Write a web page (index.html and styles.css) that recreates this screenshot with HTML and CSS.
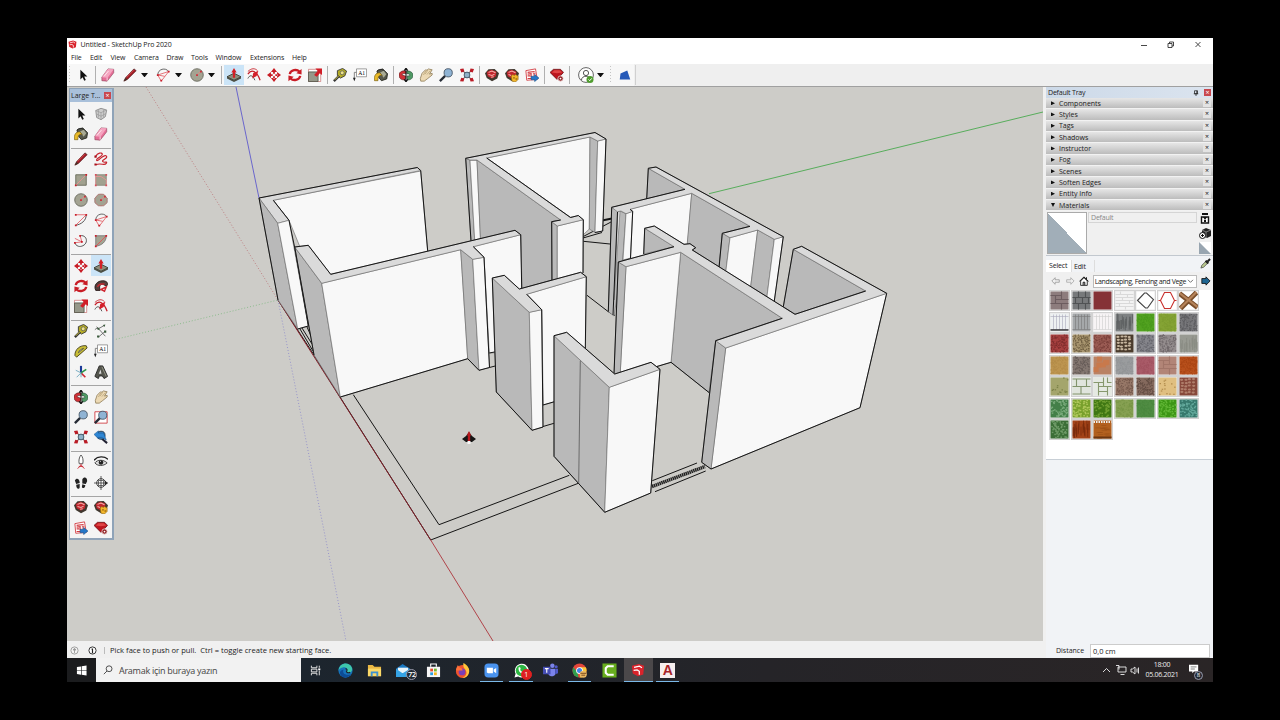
FILE: index.html
```html
<!DOCTYPE html>
<html lang="en">
<head>
  <meta charset="UTF-8" />
  <title>Untitled - SketchUp Pro 2020</title>
  <link rel="stylesheet" href="styles.css">
</head>
<body>
  <svg class="sprite">
    <symbol id="select" viewBox="0 0 16 16"><path d="M5 2v11l2.600-2.400 1.800 4 1.800-.8-1.800-4H13z" fill="#111"/></symbol>
    <symbol id="component" viewBox="0 0 16 16"><path d="M2 4l6-2.500 6.500 2L13 11l-5 3.500L3 12z" fill="#ccc" stroke="#8b8b8b"/><path d="M2 4l6 2.500 6-3M8 6.500v8M3 8l5 2.500 5.500-3M5 3v9M11 3v9" fill="none" stroke="#999" stroke-width=".8"/></symbol>
    <symbol id="eraser" viewBox="0 0 16 16"><path d="M1 10.500L8 1l6.500.5v4L7 15l-6-.5z" fill="#e56f98" stroke="#8c4258" stroke-width=".7"/><path d="M1 10.500L8 1l6.500.5-7 9.500z" fill="#f5a5c0"/><path d="M3.500 9.500l5-6M7 11v3.500" stroke="#fff" stroke-width=".8"/></symbol>
    <symbol id="paint" viewBox="0 0 16 16"><path d="M4 3l6-2 5.500 5.500-1 6-6 2-5-6z" fill="#56584c" stroke="#26271f"/><path d="M7 5l4-2 3 4-3 4z" fill="#a9ab95"/><path d="M.5 14.500C0 9 1.500 5.500 6.500 5.500l3 3c-4-.5-5 1.500-5 6z" fill="#e9b928" stroke="#6b5510" stroke-width=".7"/><path d="M3 4c2-3 6-3 8-1" fill="none" stroke="#222"/></symbol>
    <symbol id="pencil" viewBox="0 0 16 16"><path d="M1 15l2-4L12.500 1 15 3 5 13z" fill="#a8202a" stroke="#4b1115" stroke-width=".8"/><path d="M1 15l2-4L5 13z" fill="#443226"/><path d="M4 10.500L12 2.500" stroke="#e35e5c" stroke-width=".8"/></symbol>
    <symbol id="freehand" viewBox="0 0 16 16"><path d="M2 5C4 1 9 0 9.500 2.500S2 7 3 9.500 11 2 14 4.500 8 9 10 11s6-1 4 2-6-1-12 1.500" fill="none" stroke="#c5202b" stroke-width="1.300"/><path d="M.5 4h2.500v2.500H.5zM.5 13h2.500v2.500H.5z" fill="#a7101a"/></symbol>
    <symbol id="arc" viewBox="0 0 16 16"><path d="M2 8C2 1 11-1 14.500 4" fill="none" stroke="#555"/><path d="M2 8l4 7 8.500-11zM2 8l8 1.500" fill="none" stroke="#e05058" stroke-width=".9"/><path d="M1 7h2v2H1zM5 13.500h2v2H5zM13.500 3h2v2h-2z" fill="#c8202c"/></symbol>
    <symbol id="arc2" viewBox="0 0 16 16"><path d="M14 2c0 7-6 11-12 12" fill="none" stroke="#444"/><path d="M2 2h12L2 14" fill="none" stroke="#e05058" stroke-width=".9"/><path d="M1 1h2v2H1zM13 1h2v2h-2zM1 13h2v2H1z" fill="#c8202c"/></symbol>
    <symbol id="arc3" viewBox="0 0 16 16"><path d="M7 2c5-1 8 3 7 7s-6 6-9 5-3-2-4-4" fill="none" stroke="#444"/><path d="M1 10l8-1-2-7M9 9L1 5" fill="none" stroke="#e05058" stroke-width=".9"/><path d="M0 9h2v2H0zM6 1h2v2H6zM8 8h2v2H8z" fill="#c8202c"/></symbol>
    <symbol id="pie" viewBox="0 0 16 16"><path d="M2 2h12c0 7-5 11-12 12z" fill="#a4a492" stroke="#777"/><path d="M14 2L2 14" stroke="#e05058"/><path d="M1 1h2v2H1zM13 1h2v2h-2zM1 13h2v2H1z" fill="#c8202c"/></symbol>
    <symbol id="rect" viewBox="0 0 16 16"><path d="M2 2h12v12H2z" fill="#a1a18f" stroke="#666858"/><path d="M2 14L14 2" stroke="#e79494"/><path d="M1 13h2v2H1zM13 1h2v2h-2z" fill="#c8202c"/></symbol>
    <symbol id="rrect" viewBox="0 0 16 16"><path d="M2 2h12v12H2z" fill="#a1a18f" stroke="#888a7c"/><path d="M2 2v12M2 4h6l6 4v6" fill="none" stroke="#e79494"/><path d="M1 1h2v2H1zM1 13h2v2H1zM13 1h2v2h-2zM13 13h2v2h-2z" fill="#d8505c"/></symbol>
    <symbol id="circle" viewBox="0 0 16 16"><circle cx="8" cy="8" r="7.200" fill="#a3a392" stroke="#5f6155" stroke-width=".9"/><path d="M8 8l4-4" stroke="#e88080"/><path d="M7 7h2v2H7zM11.500 3h2v2h-2z" fill="#d02c38"/></symbol>
    <symbol id="polygon" viewBox="0 0 16 16"><path d="M5 1.500h6L15 6v5l-4 3.500H5L1 11V6z" fill="#a3a392" stroke="#7e6a60" stroke-width=".9"/><circle cx="8" cy="8" r="6.800" fill="none" stroke="#d88" stroke-width=".6"/><path d="M8 8l4-4" stroke="#e88080"/><path d="M7 7h2v2H7zM11.500 3h2v2h-2z" fill="#d02c38"/></symbol>
    <symbol id="pushpull" viewBox="0 0 16 16"><path d="M0 10l8-4 8 4-8 4z" fill="#8c8e7c" stroke="#3c3e33"/><path d="M0 10v2l8 4 8-4v-2l-8 4z" fill="#4b4d42"/><path d="M8 0l3 5H9.300v6H6.700V5H5z" fill="#d31f26"/></symbol>
    <symbol id="offset" viewBox="0 0 16 16"><path d="M1 7c4-6 10-4 14 7" fill="none" stroke="#c6202a" stroke-width="1.400"/><path d="M1 12c2-4 5-5 8 2" fill="none" stroke="#444"/><path d="M6 12l1-6 6-3-2 6z" fill="#d41f2a"/><path d="M1 4c4-4 8-4 11-1" fill="none" stroke="#c6202a"/></symbol>
    <symbol id="move" viewBox="0 0 16 16"><path d="M8 0l3.500 4.500h-7zM8 16l3.500-4.500h-7zM0 8l4.500-3.500v7zM16 8l-4.500-3.500v7zM7 4h2v2.500H7zM7 9.500h2V12H7zM4 7h2.500v2H4zM9.500 7H12v2H9.500z" fill="#c91d26"/></symbol>
    <symbol id="rotate" viewBox="0 0 16 16"><path d="M2 7c1-5 8-6 11-3M14 9c-1 5-8 6-11 3" fill="none" stroke="#c91d26" stroke-width="2.600"/><path d="M15.500 1v6.500L9.500 6zM.5 15V8.500L6.500 10z" fill="#c91d26"/></symbol>
    <symbol id="followme" viewBox="0 0 16 16"><path d="M2 13C-1 7 4 2 10 2s7 5 4 6l-4-2c-4 0-4 3-3 7z" fill="#54413d" stroke="#211"/><path d="M4 9c1-3 5-4 8-3M8 12l6-3-2 5z" fill="none" stroke="#cf2731" stroke-width="1.600"/></symbol>
    <symbol id="scale" viewBox="0 0 16 16"><path d="M.5 1.500h14v14H.5z" fill="#fff" stroke="#c96a6a" stroke-width=".8"/><path d="M.5 4.500h11v11H.5z" fill="#96988a" stroke="#55574c"/><path d="M8.500.5H16V8l-2.500-2L10 10 7 8l4-4.500z" fill="#d11d27"/></symbol>
    <symbol id="tape" viewBox="0 0 16 16"><path d="M5 3l6-2.500 4.500 3-2 5.500-5 2.500-3.500-3z" fill="#b7ae24" stroke="#333"/><circle cx="10.500" cy="5.500" r="2.300" fill="#eee38a" stroke="#665"/><path d="M1 15l6-6" stroke="#333" stroke-width="2.600"/><path d="M2 13.500l5-5" stroke="#e8dc43" stroke-width="1"/></symbol>
    <symbol id="dimension" viewBox="0 0 16 16"><path d="M4 6l8-4.500M3 3l10 11M1 6.500L4 4M5 15l7-6" fill="none" stroke="#555" stroke-width=".9"/><path d="M3 5l3-1v3zM10 1l3-.5-1 3zM3.500 13h2.500v2.500H3.500zM11.500 7.500h2.500V10h-2.500z" fill="#3b5c3d"/></symbol>
    <symbol id="protractor" viewBox="0 0 16 16"><path d="M1 13C1 6 7 1 14 2l1 2.500L3 15z" fill="#c8bd36" stroke="#403c18"/><path d="M5 10c1-3 3-4 6-5z" fill="#f3f3f3" stroke="#554"/></symbol>
    <symbol id="textlabel" viewBox="0 0 16 16"><path d="M4 1h11.500v9H4z" fill="#fff" stroke="#777" stroke-width=".8"/><path d="M4 5H1.500v7" fill="none" stroke="#777"/><path d="M0 11h3l-1.500 4z" fill="#222"/><text x="6" y="8.200" font-size="6.500" font-family="Liberation Serif, serif">A1</text></symbol>
    <symbol id="axes" viewBox="0 0 16 16"><path d="M8 9V1" stroke="#1b3a98" stroke-width="2.400"/><path d="M8 9l5 5" stroke="#cc2530" stroke-width="1.800"/><path d="M8 9l6-4" stroke="#299346" stroke-width="1.800"/><path d="M8 9l-6-3M8 9l-5 5M8 9v5" stroke="#6aa5bd"/></symbol>
    <symbol id="text3d" viewBox="0 0 16 16"><path d="M1 13L6 1h4l5.500 12-4 2.500-2-3H6l-1 3z" fill="#55564e" stroke="#222"/><path d="M5.500 10l2-5 1 5z" fill="#ddd"/><path d="M9 2l5 11" stroke="#999c8b"/></symbol>
    <symbol id="orbit" viewBox="0 0 16 16"><path d="M0 8c0-4 5-5.500 8-4.500v3C5 6 3.500 6.500 3.500 8L8 9.500l-1 4C3 14 0 12 0 8z" fill="#cf3035" stroke="#541b1b" stroke-width=".7"/><path d="M16 8c0-3-4-5-7-4.500v3c3 0 4 1 3 2.500H9.500v4.500C13 14 16 12 16 8z" fill="#4f9a65" stroke="#1b442a" stroke-width=".7"/><path d="M8 0v16M6 3l2-3 2 3M6 13l2 3 2-3" fill="none" stroke="#111" stroke-width="1.200"/></symbol>
    <symbol id="pan" viewBox="0 0 16 16"><path d="M1.500 12L3.500 6l4-4 1.500.5L11 1l1.500.5L15 2l-3 5 3-1v2l-5 4-4 3H2z" fill="#ecd9b4" stroke="#8d7a55" stroke-width=".9"/><path d="M7 7l3-4.500M9 7.500l4-4.500M5 8l3-5" stroke="#aa9468" stroke-width=".7"/></symbol>
    <symbol id="zoom" viewBox="0 0 16 16"><path d="M1 15l6-6" stroke="#252b35" stroke-width="2.600"/><circle cx="10.500" cy="5.500" r="4.700" fill="#8fb3d4" stroke="#445364"/></symbol>
    <symbol id="zoomwin" viewBox="0 0 16 16"><path d="M1 2h14v13H1z" fill="#fff" stroke="#cf3a40"/><path d="M1 15l6-6" stroke="#252b35" stroke-width="2.600"/><circle cx="10" cy="6" r="4.600" fill="#8fb3d4" stroke="#445364"/></symbol>
    <symbol id="extents" viewBox="0 0 16 16"><path d="M2 2l12 12M14 2L2 14" stroke="#555" stroke-width="1.200"/><path d="M0 1l4-.5L5 4 1.500 5zM16 1l-4-.5L11 4l3.500 1zM0 15l4 .5L5 12l-3.500-1zM16 15l-4 .5L11 12l3.500-1z" fill="#bb1c26"/><circle cx="8" cy="8" r="3.300" fill="#8fb3c8" stroke="#3b4d5e"/></symbol>
    <symbol id="previous" viewBox="0 0 16 16"><path d="M9 10l6 5" stroke="#223" stroke-width="2.300"/><circle cx="8" cy="6" r="4.600" fill="#3a85c8" stroke="#234"/><path d="M0 5l5-4v2.500h6l3 8-5-3H5V10z" fill="#2e86d4" stroke="#15508a" stroke-width=".6"/></symbol>
    <symbol id="camera" viewBox="0 0 16 16"><path d="M8 0c2 2 3 6 2 10H6C5 7 6 2 8 0z" fill="#fff" stroke="#444"/><path d="M8 10v3M4 15.500L8 12l4 3.500M5.500 13h5" fill="none" stroke="#cc2530"/></symbol>
    <symbol id="eye" viewBox="0 0 16 16"><path d="M0 6c4-5 12-5 16-1" fill="none" stroke="#222" stroke-width="1.600"/><path d="M1 9c3-4 10-4 14 0-4 4-11 4-14 0z" fill="#ddd" stroke="#333"/><circle cx="8" cy="8.500" r="2.600" fill="#222"/><path d="M7 7h1v1H7z" fill="#fff"/></symbol>
    <symbol id="walk" viewBox="0 0 16 16"><path d="M1 5c2-4 6-1 5.500 3L2.500 9zM2.500 10l4-1v4c-1 3-4 2-4-3zM9.500 4c2-4 6-2 5.500 2l-1.500 3-4-.500zM9.500 9.500l3.500 1c-.5 4-3.500 4-4 2z" fill="#222"/></symbol>
    <symbol id="section" viewBox="0 0 16 16"><circle cx="8" cy="8" r="5" fill="#fff" stroke="#333"/><path d="M8 0v16M0 8h16M5 5h6v6H5z" fill="none" stroke="#333" stroke-width=".9"/><path d="M12.500 5l3 3-3 3z" fill="#222"/></symbol>
    <symbol id="warehouse" viewBox="0 0 16 16"><path d="M0 6l4-4.500L11 1l5 5-2 6-6 3-6-3.500z" fill="#40382f"/><path d="M2 4.500l5-2.500 6 2-.5 5.500-4.500 2.500-5-2.500z" fill="#c2262d"/><path d="M4 5l4-1.500 4 2M4 7.500l4 1 3-1.500M7 10.500l3-.5" fill="none" stroke="#f3b1ad" stroke-width="1.200"/></symbol>
    <symbol id="extwarehouse" viewBox="0 0 16 16"><path d="M0 6l4-4.500L11 1l5 5-2 6-6 3-6-3.500z" fill="#40382f"/><path d="M2 4.500l5-2.500 6 2-.5 5.500-4.500 2.500-5-2.500z" fill="#c2262d"/><path d="M4 5l4-1.500 4 2M4 7.500l3 1" fill="none" stroke="#f3b1ad" stroke-width="1.200"/><path d="M7 9l2-1.500 1.500 1L12 7.500 15 9v4l-3 3-4-1z" fill="#f2b62c" stroke="#8b6412" stroke-width=".7"/><path d="M9.500 10.500h1.500v1.500H9.500zM12 12h2v1h-2z" fill="#7b4d08"/></symbol>
    <symbol id="layout" viewBox="0 0 16 16"><path d="M1 3l11-2 2 12-12 1z" fill="#fff" stroke="#d13a40"/><path d="M3 5l8-1M3 7l4-.500v4M9 6l3 0M3 9h3M3 12h5M9 8h3" stroke="#d13a40" stroke-width="1.300" fill="none"/><path d="M7 9.500h4V7.500l5 4-5 4v-2H7z" fill="#2377c9" stroke="#134b84" stroke-width=".6"/></symbol>
    <symbol id="extmanager" viewBox="0 0 16 16"><path d="M0 5l4-3.500h8L15.500 5 8 13z" fill="#bd161f" stroke="#630d11" stroke-width=".8"/><path d="M2 5l3-2.500h6l3 2.500-6 1z" fill="#e04546"/><circle cx="12" cy="12" r="3" fill="#8f2023" stroke="#f0dada" stroke-width=".9"/><circle cx="12" cy="12" r="1" fill="#fff"/></symbol>
    <symbol id="account" viewBox="0 0 16 16"><circle cx="8" cy="8" r="7.400" fill="#fff" stroke="#555" stroke-width=".9"/><circle cx="8" cy="6" r="2.600" fill="none" stroke="#555"/><path d="M3.500 13c0-5 9-5 9 0" fill="none" stroke="#555"/><circle cx="12" cy="12.500" r="3.500" fill="#4f9c2e"/><path d="M10.500 12.500l1.200 1.200 2-2.300" fill="none" stroke="#fff"/></symbol>
    <symbol id="plugin" viewBox="0 0 16 16"><path d="M2 6l9-4 4 12H1z" fill="#2559b8"/></symbol>
    <symbol id="logo" viewBox="0 0 16 16"><path d="M1 3l8-2 6 2-1 10-6 2-6-3z" fill="#d9232b"/><path d="M3.500 5l6-1.500 3 2M3 8.500l4-.500 2.500 1.500v4" fill="none" stroke="#fff" stroke-width="1.400"/></symbol>
    <symbol id="caret" viewBox="0 0 8 5"><path d="M0 0h8L4 5z" fill="#111"/></symbol>
  </svg>

  <div class="window">
    <div class="titlebar">
      <svg class="logo"><use href="#logo"/></svg>
      <span class="title">Untitled - SketchUp Pro 2020</span>
      <svg class="controls" viewBox="0 0 60 10"><path d="M0 5.500h6M27 3.500h4v4h-4zM28.500 3.500V2h4v4H31M54.500 2l5 5M59.500 2l-5 5" fill="none" stroke="#333" stroke-width=".9"/></svg>
    </div>
    <div class="menubar">
      <span>File</span><span>Edit</span><span>View</span><span>Camera</span><span>Draw</span><span>Tools</span><span>Window</span><span>Extensions</span><span>Help</span>
    </div>
    <div class="toolbar">
      <i class="grip"></i>
      <span class="tool"><svg><use href="#select"/></svg></span>
      <i class="sep"></i>
      <span class="tool"><svg><use href="#eraser"/></svg></span>
      <span class="tool drop"><svg><use href="#pencil"/></svg><svg class="caret"><use href="#caret"/></svg></span>
      <span class="tool drop"><svg><use href="#arc"/></svg><svg class="caret"><use href="#caret"/></svg></span>
      <span class="tool drop"><svg><use href="#circle"/></svg><svg class="caret"><use href="#caret"/></svg></span>
      <i class="sep"></i>
      <span class="tool active"><svg><use href="#pushpull"/></svg></span>
      <span class="tool"><svg><use href="#offset"/></svg></span>
      <span class="tool"><svg><use href="#move"/></svg></span>
      <span class="tool"><svg><use href="#rotate"/></svg></span>
      <span class="tool"><svg><use href="#scale"/></svg></span>
      <i class="sep"></i>
      <span class="tool"><svg><use href="#tape"/></svg></span>
      <span class="tool"><svg><use href="#textlabel"/></svg></span>
      <span class="tool"><svg><use href="#paint"/></svg></span>
      <i class="sep"></i>
      <span class="tool"><svg><use href="#orbit"/></svg></span>
      <span class="tool"><svg><use href="#pan"/></svg></span>
      <span class="tool"><svg><use href="#zoom"/></svg></span>
      <span class="tool"><svg><use href="#extents"/></svg></span>
      <i class="sep"></i>
      <span class="tool"><svg><use href="#warehouse"/></svg></span>
      <span class="tool"><svg><use href="#extwarehouse"/></svg></span>
      <span class="tool"><svg><use href="#layout"/></svg></span>
      <i class="sep"></i>
      <span class="tool"><svg><use href="#extmanager"/></svg></span>
      <i class="sep"></i>
      <span class="tool drop account"><svg><use href="#account"/></svg><svg class="caret"><use href="#caret"/></svg></span>
      <i class="grip"></i>
      <span class="tool plugin"><svg><use href="#plugin"/></svg></span>
    </div>

    <div class="workspace">
      <div class="viewport">
        <svg class="model" viewBox="67 87 976 554">
          <!-- slab and floor -->
          <path class="edge" d="M314 355L340 397L430.700 540L578.300 483.300M353.300 394.700L439 524.700L569.300 475.300"/>
          <path class="edge" d="M278 300L314 355M300 329L313 351M302 328L312 344M307 327L311.500 337"/>
          <path class="edge" d="M583 238L602 232.500M583 229.500L590 228.500M583.300 236.500L611 222M583.300 241.300L610 244M587 295.300L608.300 311.700L615 315.500"/>
          <path class="edge heavy" d="M602 220.500L612 218.500"/>

          <!-- axes -->
          <path class="red strong" d="M278 300L430.700 540"/>
          <path class="red" d="M430.700 540L493 641"/>
          <path class="red dots" d="M146 87L278 300"/>
          <path class="blue" d="M236 87L259 198"/>
          <path class="blue dots" d="M278 300L346 641"/>
          <path class="green" d="M709 193.700L1043 112"/>
          <path class="green dots" d="M113 340L278 300"/>

          <!-- back left wall -->
          <path class="lit" d="M273.300 200.300L420.700 171L427.700 252V270L331 275L300 247L289 220.300z"/>
          <path class="top" d="M259 198L417.300 167.500L420.700 170.500L273.300 200.300L289 220.300L277.700 223.300z"/>
          <path class="dark" d="M259 198L277.700 223.300L297.700 329L278 300z"/>
          <path class="lit" d="M277.700 223.300L289 220.300L308.300 326L297.700 329z"/>
          <path class="edge" d="M278 300L259 198L417.300 167.500L420.700 170.500L427.700 251M273.300 200.300L289 220.300L295 249L308.300 326L297.700 329"/>

          <!-- middle back wall -->
          <path class="lit" d="M486.700 158L590 137L589.300 229L583 235V219.700L570 217z"/>
          <path class="dark" d="M590 137L597.700 141L595 232.500L589.300 229z"/>
          <path class="lit" d="M597.700 141L606 139L602.700 231L595 232.500z"/>
          <path class="dark" d="M465.700 158.300L470 160.300L474.700 241H471z"/>
          <path class="lit" d="M470 160.300H477L480.500 240H474.700z"/>
          <path class="dark" d="M477 160L560.700 220L551.700 221.700L552 280L521 289L520.700 234.700L480.500 240z"/>
          <path class="dark" d="M551.700 221.700L557.300 226V280H551.700z"/>
          <path class="lit" d="M557.300 226L583.300 219.700L583 273L557.300 280z"/>
          <path class="top" d="M465.700 158.300L595 132.500L606 139L597.700 141L590 137L486.700 158L570.500 217.500L578.300 215.500L583.300 219.700L557.300 226L551.700 221.700L560.700 220L477 160H470z"/>
          <path class="edge" d="M471 241L465.700 158.300L595 132.500L606 139L602.700 231L595 232.500M486.700 158L570.500 217.500L578.300 215.500L583.300 219.700L583 273M560.700 220L551.700 221.700L552 280"/>

          <!-- left front room -->
          <path class="lit" d="M473.300 246.700L520.700 234.700L522 290L510 352L489.300 353L484 257z"/>
          <path class="dark" d="M294.700 247L321.700 283.300L340.300 397L314 355z"/>
          <path class="lit" d="M321.700 283.300L460.700 249.700L467.700 358.700L340.300 397z"/>
          <path class="dark" d="M460.700 249.700L472.700 259.300L479 370.300L467.700 358.700z"/>
          <path class="lit" d="M472.700 259.300L484 257.300L489.500 367.500L479 370.300z"/>
          <path class="top" d="M294.700 247L308.300 245.300L330.700 274.300L515 230.300L520.700 234.700L473.300 246.700L484 257.300L472.700 259.300L460.700 249.700L321.700 283.300z"/>
          <path class="edge" d="M314 355L294.700 247L308.300 245.300L330.700 274.300L515 230.300L520.700 234.700L521.700 288M473.300 246.700L484 257.300L489.500 367.500L479 370.300L467.700 358.700L340.300 397M489.300 353L497 351.500M489.500 367.500L497 365.500"/>

          <!-- inner partition -->
          <path class="dark" d="M492.300 278L529.300 312.300L532 430.300L496.300 392z"/>
          <path class="lit" d="M526.700 294.300L586.300 276.700L585.300 360L554 402L543.300 405L541.700 309.700z"/>
          <path class="lit" d="M529.300 312.300L541.700 309.700L543 427L532 430.300z"/>
          <path class="top" d="M492.300 278L504.300 275.300L519.300 289L580.700 272.300L586.300 276.700L526.700 294.300L541.700 309.700L529.300 312.300z"/>
          <path class="edge" d="M492.300 278L504.300 275.300L519.300 289L580.700 272.300L586.300 276.700L585.300 348M526.700 294.300L541.700 309.700L543 427L532 430.300L496.300 392L492.300 278M543 405L555 401.500M543 426.500L555 423"/>

          <!-- right back room -->
          <path class="dark" d="M648.300 168.300L685 189.300L646.700 199z"/>
          <path class="lit" d="M630 209.300L691.700 193.300L687 250L630 260z"/>
          <path class="dark" d="M691.700 193.300L750 226.300L722.300 233.300L719 270L687 246z"/>
          <path class="dark" d="M722.300 233.300L730 237.700L725.500 274L718.700 269z"/>
          <path class="lit" d="M730 237.700L757.700 230L750.500 288L725.500 274z"/>
          <path class="dark" d="M757.700 230L774.300 239.300L766.500 300L750.500 288z"/>
          <path class="lit" d="M774.300 239.300L783.300 236.700L774 303L766.500 300z"/>
          <path class="dark" d="M611.700 207.300L626 213.700L622.500 262L614 316L608.300 311.700z"/>
          <path class="lit" d="M618 211.500L620 211L616.500 262L614 300z"/>
          <path class="lit" d="M626 213.700L632.700 211.300L630.500 258L623 260z"/>
          <path class="top" d="M611.700 207.300L685 189.300L648.300 168.300L656 167L783.300 236.700L774.300 239.300L757.700 230L730 237.700L722.300 233.300L750 226.300L691.700 193.300L630 209.300L632.700 211.300L626 213.700L621 211L617.300 211.700z"/>
          <path class="edge" d="M646.700 199L648.300 168.300L656 167L783.300 236.700L774 303M608.300 311.700L611.700 207.300L685 189.300M630 209.300L632.700 211.300L630.500 258M719 268L722.300 233.300L750 226.300M617.500 212L613 315"/>

          <!-- right room -->
          <path class="dark" d="M644.700 228.300L674 246.700L643.700 254z"/>
          <path class="dark" d="M793.300 249.300L865.700 291L795 314.300L783.300 306.700z"/>
          <path class="dark" d="M680.700 252.300L782.300 318.300L715.700 340.700L709 392.500L671 362.300z"/>
          <path class="lit" d="M626 266.700L680.700 252.300L671 362.300L620 377z"/>
          <path class="dark" d="M618.300 262L626 266.700L620 377L614 374z"/>
          <path class="lit" d="M725.700 348L886.700 293.300L860 407.700L711 469z"/>
          <path class="dark" d="M715.700 340.700L725.700 348L711 469L701.700 462.300z"/>
          <path class="top" d="M644.700 228.300L654.300 226L684 244.300L690 243.700L695.700 247.700L692.300 250L795 314.300L865.700 291L793.300 249.300L801.700 246.300L886.700 293.300L725.700 348L715.700 340.700L782.300 318.300L680.700 252.300L626 266.700L618.300 262L674 246.700z"/>
          <path class="edge" d="M643.700 254L644.700 228.300L654.300 226L684 244.300L690 243.700L695.700 247.700L692.300 250L795 314.300L865.700 291M783.300 306.700L793.300 249.300L801.700 246.300L886.700 293.300L860 407.700L711 469L701.700 462.300L715.700 340.700L782.300 318.300M614 374L618.300 262L674 246.700M709 392.500L671 362.300L657 366.500"/>

          <!-- front corner -->
          <path class="dark" d="M554 335.700L609.300 387.300L604.700 512.300L554 456.300z"/>
          <path class="lit" d="M609.300 387.300L660 369.300L650.700 493L604.700 512.300z"/>
          <path class="top" d="M554 335.700L566.700 332.300L614.700 374L651 362.300L660 369.300L609.300 387.300z"/>
          <path class="edge" d="M554 335.700L566.700 332.300L614.700 374L651 362.300L660 369.300L650.700 493L604.700 512.300L554 456.300z"/>
          <path class="thin" d="M580.300 360.700L578.700 482.700"/>

          <!-- door threshold -->
          <path class="edge" d="M652.300 480.700L697 463M655 491.700L705.700 471"/>
          <path class="hatch" d="M652 486.500L705 466.500"/>

          <!-- cursor -->
          <path d="M462 439l4-3 3-4 3 4 4 3-4 3h-6z" fill="#151515"/>
          <path d="M469 431l2.200 4.500h-1V441h-2.400v-5.500h-1z" fill="#b9161c"/>
          <path d="M467.500 441h3v3h-3z" fill="#f5f5f5"/>
        </svg>

        <div class="palette">
          <div class="palette-title"><span>Large T...</span><i class="close">×</i></div>
          <div class="group">
            <span><svg><use href="#select"/></svg></span><span><svg><use href="#component"/></svg></span>
            <span><svg><use href="#paint"/></svg></span><span><svg><use href="#eraser"/></svg></span>
          </div>
          <div class="group">
            <span><svg><use href="#pencil"/></svg></span><span><svg><use href="#freehand"/></svg></span>
            <span><svg><use href="#rect"/></svg></span><span><svg><use href="#rrect"/></svg></span>
            <span><svg><use href="#circle"/></svg></span><span><svg><use href="#polygon"/></svg></span>
            <span><svg><use href="#arc2"/></svg></span><span><svg><use href="#arc"/></svg></span>
            <span><svg><use href="#arc3"/></svg></span><span><svg><use href="#pie"/></svg></span>
          </div>
          <div class="group">
            <span><svg><use href="#move"/></svg></span><span class="active"><svg><use href="#pushpull"/></svg></span>
            <span><svg><use href="#rotate"/></svg></span><span><svg><use href="#followme"/></svg></span>
            <span><svg><use href="#scale"/></svg></span><span><svg><use href="#offset"/></svg></span>
          </div>
          <div class="group">
            <span><svg><use href="#tape"/></svg></span><span><svg><use href="#dimension"/></svg></span>
            <span><svg><use href="#protractor"/></svg></span><span><svg><use href="#textlabel"/></svg></span>
            <span><svg><use href="#axes"/></svg></span><span><svg><use href="#text3d"/></svg></span>
          </div>
          <div class="group">
            <span><svg><use href="#orbit"/></svg></span><span><svg><use href="#pan"/></svg></span>
            <span><svg><use href="#zoom"/></svg></span><span><svg><use href="#zoomwin"/></svg></span>
            <span><svg><use href="#extents"/></svg></span><span><svg><use href="#previous"/></svg></span>
          </div>
          <div class="group">
            <span><svg><use href="#camera"/></svg></span><span><svg><use href="#eye"/></svg></span>
            <span><svg><use href="#walk"/></svg></span><span><svg><use href="#section"/></svg></span>
          </div>
          <div class="group">
            <span><svg><use href="#warehouse"/></svg></span><span><svg><use href="#extwarehouse"/></svg></span>
            <span><svg><use href="#layout"/></svg></span><span><svg><use href="#extmanager"/></svg></span>
          </div>
        </div>
      </div>

      <div class="tray">
        <div class="tray-title"><span>Default Tray</span>
          <svg class="pin" viewBox="0 0 8 8"><path d="M2 1h4v4H2zM1 5h6M4 5v3M5 1v4" fill="none" stroke="#222"/></svg><i class="close">×</i></div>
        <div class="panel"><b class="right"></b><span>Components</span><i>×</i></div>
        <div class="panel"><b class="right"></b><span>Styles</span><i>×</i></div>
        <div class="panel"><b class="right"></b><span>Tags</span><i>×</i></div>
        <div class="panel"><b class="right"></b><span>Shadows</span><i>×</i></div>
        <div class="panel"><b class="right"></b><span>Instructor</span><i>×</i></div>
        <div class="panel"><b class="right"></b><span>Fog</span><i>×</i></div>
        <div class="panel"><b class="right"></b><span>Scenes</span><i>×</i></div>
        <div class="panel"><b class="right"></b><span>Soften Edges</span><i>×</i></div>
        <div class="panel"><b class="right"></b><span>Entity Info</span><i>×</i></div>
        <div class="panel"><b class="down"></b><span>Materials</span><i>×</i></div>

        <div class="material">
          <div class="preview"></div>
          <div class="name">Default</div>
          <div class="material-tools">
            <svg viewBox="0 0 12 12"><path d="M2.500 5h7v6h-7z" fill="#fff" stroke="#111" stroke-width="1.400"/><path d="M3 1h6v2H3zM4 5h4L6 8zM5 8h2v2H5z" fill="#111"/></svg>
            <svg viewBox="0 0 12 12"><path d="M3 3l4-2 5 2v6l-4 2-5-2z" fill="#222"/><path d="M3 3l4 2 5-2M7 5v6" stroke="#aaa" fill="none" stroke-width=".7"/><circle cx="3.500" cy="8.500" r="3" fill="#fff" stroke="#111"/><path d="M3.500 7v3M2 8.500h3" stroke="#111"/></svg>
            <svg class="half" viewBox="0 0 12 12"><path d="M0 0h12v12z" fill="#fff"/><path d="M0 0v12h12z" fill="#98a5b0"/></svg>
          </div>
        </div>
        <div class="tabs"><span class="on">Select</span><span>Edit</span>
          <svg viewBox="0 0 12 12"><path d="M1 11l1-3 5-5 2 2-5 5z" fill="#b9c98e" stroke="#444" stroke-width=".8"/><path d="M6 3l3 3M8 4l3-3" stroke="#222" stroke-width="2.200"/></svg>
        </div>
        <div class="nav">
          <svg viewBox="0 0 12 12"><path d="M1 6l4-4v2.500h5v3H5V10z" fill="none" stroke="#999"/></svg>
          <svg viewBox="0 0 12 12"><path d="M11 6L7 2v2.500H2v3h5V10z" fill="none" stroke="#aaa"/></svg>
          <svg viewBox="0 0 12 12"><path d="M2 6v5.300h8V6L6 2z" fill="#fff" stroke="#111"/><path d="M.5 6.500L6 1l5.500 5.500M5 11V7.500h2V11M9 1.500V4" fill="none" stroke="#111" stroke-width="1.200"/></svg>
          <div class="dropdown"><span>Landscaping, Fencing and Vege</span><svg viewBox="0 0 8 6"><path d="M1 1l3 3 3-3" fill="none" stroke="#555"/></svg></div>
          <svg class="details" viewBox="0 0 12 12"><path d="M1 3h5V1l5 5-5 5V9H1z" fill="#1d6490" stroke="#111"/></svg>
        </div>
        <div class="swatches" id="swatches"></div>
      </div>
    </div>

    <div class="statusbar">
      <svg viewBox="0 0 10 10"><circle cx="5" cy="5" r="4" fill="#f5f5f5" stroke="#999"/><path d="M5 8V4M3.500 4.500L5 2.500l1.500 2z" fill="#999" stroke="#999"/></svg>
      <svg viewBox="0 0 10 10"><circle cx="5" cy="5" r="4" fill="#fff" stroke="#222"/><path d="M5 8V3M4 3.500h1.600" stroke="#222" stroke-width="1.300"/></svg>
      <i></i>
      <span class="hint">Pick face to push or pull.&nbsp; Ctrl = toggle create new starting face.</span>
      <div class="measure"><span>Distance</span><div class="value">0,0 cm</div></div>
    </div>

    <div class="taskbar">
      <div class="start"><svg viewBox="0 0 12 12"><path d="M1 2.200l4.500-.7v4.200H1zM6.200 1.400L11.500.6v5.100H6.200zM1 6.400h4.500v4.200L1 9.900zM6.200 6.400h5.300v5.100l-5.300-.8z" fill="#fff"/></svg></div>
      <div class="search"><svg viewBox="0 0 12 12"><circle cx="7.300" cy="4.500" r="3.500" fill="none" stroke="#333"/><path d="M4.800 7.200L1 11" stroke="#333"/></svg><span>Aramak için buraya yazın</span></div>
      <div class="apps">
        <span><svg viewBox="0 0 16 16"><path d="M2 1v3h8V1M2 15v-3h8v3M2 6h8v4H2zM13.500 1v3M13.500 8v7" fill="none" stroke="#e5e5e5" stroke-width="1.400"/><path d="M12 5h3v2.500h-3z" fill="#fff"/></svg></span>
        <span><svg viewBox="0 0 16 16"><circle cx="8" cy="8" r="7.600" fill="#1673bb"/><path d="M.6 8C1 2 7-1 12 1.500c4 2.500 4 7 1 8.500-2 .8-4 0-4-1 2-2 0-5-3-4.500C3 5 1 6.500.6 8z" fill="#3ec6ab"/><path d="M6 7c-2 4 2 7 8 5-2 3-6 4-9 3-4-3-4-7 1-8z" fill="#0d4c96"/><path d="M8 6c2 0 2 2 1 3 0 1 2 2 4 1" fill="none" stroke="#1c2430" stroke-width="1.200"/></svg></span>
        <span><svg viewBox="0 0 16 16"><path d="M1 2h5l2 2h7v10H1z" fill="#eab843"/><path d="M1 6h14v8H1z" fill="#fbd968"/><path d="M4 14V9h8v5h-2v-3H6v3z" fill="#3d91cf"/></svg></span>
        <span class="mail"><svg viewBox="0 0 16 16"><path d="M0 6l7-5 8 5v9H0z" fill="#1a79c2"/><path d="M2 5h11v6H2z" fill="#e9f5fb"/><path d="M0 6l7 5 8-5v9H0z" fill="#35a3e5"/></svg><em>72</em></span>
        <span><svg viewBox="0 0 16 16"><path d="M5 4V1h6v3" fill="none" stroke="#fff" stroke-width="1.200"/><path d="M1 4h14v11H1z" fill="#f6f6f6"/><path d="M4.500 6h3v3h-3z" fill="#e74d2e"/><path d="M8.500 6h3v3h-3z" fill="#76b82e"/><path d="M4.500 10h3v3h-3z" fill="#2e9fe0"/><path d="M8.500 10h3v3h-3z" fill="#f5b81d"/></svg></span>
        <span><svg viewBox="0 0 16 16"><circle cx="8" cy="9" r="7" fill="#f0532d"/><path d="M9 0c4 2 7 6 6 10s-4 6-7 6c3-2 5-4 4-7s-4-4-3-9z" fill="#ffc53a"/><circle cx="7.500" cy="9.500" r="3.600" fill="#7b3fb7"/><path d="M1 8c0-3 2-5 2-6l2 3c2 0 3 1 3 3H5z" fill="#ff7139"/></svg></span>
        <span class="run"><svg viewBox="0 0 16 16"><rect x=".5" y=".5" width="15" height="15" rx="4" fill="#4a93ee"/><path d="M3 5h6.500v6H4.500L3 10zM10.300 7L13 5.200v5.600L10.300 9z" fill="#fff"/></svg></span>
        <span class="run whatsapp"><svg viewBox="0 0 16 16"><path d="M.5 15.500l1.200-4A7.400 7.400 0 1 1 4.500 14.500z" fill="#fff"/><circle cx="8" cy="8" r="6.200" fill="#2db742"/><path d="M5 4.500l1.500 0 .7 2-.7.800c.6 1.200 1.300 1.800 2.400 2.300l.9-1 1.900.9c0 1.500-1 2-2 2C6.800 11.200 4 8 5 4.500z" fill="#fff"/></svg><em>1</em></span>
        <span><svg viewBox="0 0 16 16"><circle cx="10" cy="3" r="2.400" fill="#7b83eb"/><circle cx="14" cy="4" r="1.700" fill="#5059c9"/><path d="M6 6h7v6c-1 3-6 3-7 0z" fill="#7b83eb"/><path d="M13 6h3v5l-3 1z" fill="#5059c9"/><path d="M0 4h8v8H0z" fill="#454db3"/><path d="M2 6h4M4 6v4.500" stroke="#fff" stroke-width="1.200"/></svg></span>
        <span class="run"><svg viewBox="0 0 16 16"><circle cx="8" cy="8" r="7.500" fill="#e4463a"/><path d="M1.500 4.500L6 10l1 5.400A7.500 7.500 0 0 1 1.500 4.500z" fill="#2f9e4e"/><path d="M8 4.500h6.700A7.500 7.500 0 0 1 8 15.500L11 9z" fill="#f8c93a"/><circle cx="8" cy="8" r="3.600" fill="#fff"/><circle cx="8" cy="8" r="2.700" fill="#4285e8"/><circle cx="12" cy="12" r="3.800" fill="#e9b763"/><path d="M9 11h6M10 13h4" stroke="#7b4a1c" stroke-width="1"/></svg></span>
        <span><svg viewBox="0 0 16 16"><path d="M.5.5h15v15H.5z" fill="#67ad1e"/><path d="M12.500 3.500H6L4 5.500v5l2 2h6.500" fill="none" stroke="#fff" stroke-width="2.200"/></svg></span>
        <span class="run current"><svg viewBox="0 0 16 16"><use href="#logo"/></svg></span>
        <span class="run acad"><b>A</b></span>
      </div>
      <div class="systray">
        <svg viewBox="0 0 36 12"><path d="M1 8l3.500-3.500L8 8M16 3h8v5h-8zM18.500 10.500h4M14 1.500h3v4M29 5h1.500L33 3v7l-2.500-2H29zM35 4.500v4M36.500 3.500v6" fill="none" stroke="#eee" stroke-width=".9"/></svg>
        <div class="clock"><span>18:00</span><span>05.06.2021</span></div>
        <div class="notes"><svg viewBox="0 0 14 12"><path d="M1 1h11v8H7l-2 2V9H1z" fill="#fff"/><path d="M3 3.500h7M3 6h5" stroke="#444" stroke-width=".8"/></svg><em>8</em></div>
      </div>
    </div>
  </div>

  <script src="swatches.js"></script>
</body>
</html>
```

FILE: styles.css
```css
* {
  box-sizing: border-box;
}

body {
  margin: 0;
  height: 720px;
  overflow: hidden;
  background: #000;
  font-family: "Open Sans", "Noto Sans", sans-serif;
  font-size: 7px;
  color: #222;
  display: flex;
  justify-content: center;
  align-items: center;
}

.sprite {
  display: none;
}

i, em {
  font-style: normal;
}

.window {
  width: 1146px;
  height: 644px;
  background: #f0f0f0;
  display: flex;
  flex-direction: column;
  white-space: nowrap;
}

.titlebar {
  height: 13px;
  background: #fff;
  display: flex;
  align-items: center;
}

.titlebar .logo {
  width: 9px;
  height: 9px;
  margin: 0 3.5px 0 1px;
}

.title {
  letter-spacing: -0.1px;
}

.titlebar .controls {
  width: 60px;
  height: 10px;
  margin-left: auto;
  margin-right: 12px;
  overflow: visible;
}

.menubar {
  height: 13px;
  background: #fff;
  padding-left: 4px;
  display: grid;
  grid-template-columns: 19px 20.5px 23.5px 32.5px 24.5px 24.5px 34.5px 42px auto;
  justify-content: start;
  align-items: center;
  letter-spacing: -0.1px;
}

.toolbar {
  height: 23px;
  border-bottom: 1px solid #a0a0a0;
  background: linear-gradient(90deg, #f7f7f7 567px, #efefef 567px);
  display: flex;
  align-items: center;
}

.tool {
  width: 20.3px;
  height: 20px;
  display: flex;
  align-items: center;
  justify-content: center;
}

.tool svg {
  width: 14px;
  height: 14px;
}

.tool.active {
  background: #cbe4f7;
}

.tool.drop {
  width: 33.5px;
  justify-content: flex-start;
  padding-left: 4.5px;
  gap: 4.5px;
}

.tool .caret {
  width: 7px;
  height: 4.5px;
}

.tool.account {
  margin-left: 2px;
}

.account svg:first-child {
  width: 16px;
  height: 16px;
  margin: 0 -1px;
}

.grip {
  width: 6px;
  height: 18px;
  background: repeating-linear-gradient(#c4c4c4 0 1px, transparent 1px 3px) 2px 0 / 1px 100% no-repeat;
}

.sep {
  width: 1px;
  height: 18px;
  margin: 0 1.9px;
  background: #b0b0b0;
}

.plugin {
  margin-left: 2px;
  border-right: 1px solid #d0d0d0;
}

.tool.plugin svg {
  width: 12px;
  height: 12px;
}

.workspace {
  height: 555px;
  display: flex;
}

.viewport {
  width: 976px;
  height: 554px;
  background: #cdccc8;
  position: relative;
}

.model {
  display: block;
  width: 976px;
  height: 554px;
}

.model path {
  stroke-linejoin: round;
}

.lit {
  fill: #f8f8f8;
}

.dark {
  fill: #b9b9b9;
}

.top {
  fill: #dadada;
}

.lit, .dark, .top {
  stroke: #666;
  stroke-width: 0.6;
}

.edge {
  fill: none;
  stroke: #151515;
  stroke-width: 1;
}

.heavy {
  stroke-width: 2.2;
}

.thin {
  fill: none;
  stroke: #555;
  stroke-width: 0.8;
}

.hatch {
  fill: none;
  stroke: #222;
  stroke-width: 3.5;
  stroke-dasharray: 1.5 0.5;
}

.red, .blue, .green {
  fill: none;
  stroke-width: 1;
}

.red {
  stroke: #b0444a;
}

.strong {
  stroke: #86202a;
}

.blue {
  stroke: #6a66cc;
}

.green {
  stroke: #58ad5c;
}

.dots {
  stroke-dasharray: 1 2;
  opacity: 0.55;
}

.palette {
  position: absolute;
  left: 2px;
  top: 1px;
  width: 45px;
  height: 452px;
  background: #f4f4f4;
  border: 1px solid #8fa3b8;
  border-right-width: 2px;
  border-bottom-width: 2px;
}

.palette-title {
  height: 13px;
  margin-bottom: 1.8px;
  padding: 0 1px;
  background: #a9c0da;
  display: flex;
  align-items: center;
  justify-content: space-between;
}

.close {
  width: 7px;
  height: 7px;
  background: #c9484e;
  color: #fff;
  font-size: 7px;
  line-height: 7px;
  text-align: center;
}

.group {
  margin: 0 1px 4.4px;
  display: grid;
  grid-template-columns: 20px 20px;
  grid-auto-rows: 20.4px;
}

.group + .group {
  box-shadow: 0 -1px 0 #a5a5a5;
}

.group span {
  display: flex;
  align-items: center;
  justify-content: center;
}

.group svg {
  width: 14px;
  height: 14px;
}

.group .active {
  background: #cbe4f7;
}

.tray {
  width: 170px;
  height: 571px;
  padding-left: 3px;
  background: #f1f3f6;
  background-clip: content-box;
  z-index: 1;
}

.tray-title {
  height: 11px;
  padding: 0 2px;
  background: linear-gradient(90deg, #ccd9e8, #dbe4ef);
  display: flex;
  align-items: center;
  letter-spacing: -0.2px;
}

.tray-title .pin {
  width: 6px;
  height: 6px;
  margin: 0 5px 0 auto;
}

.panel {
  height: 11.33px;
  padding: 0 2px 0 5px;
  background: linear-gradient(#e6e6e6, #bcbcbc);
  border-bottom: 1px solid #f2f2f2;
  display: flex;
  align-items: center;
}

.panel b {
  width: 8px;
}

.panel b::before {
  content: "";
  display: block;
  width: 4px;
  height: 4px;
  background: #111;
  clip-path: polygon(0 0, 100% 50%, 0 100%);
}

.panel .down::before {
  clip-path: polygon(0 0, 100% 0, 50% 100%);
}

.panel i {
  width: 8px;
  height: 8px;
  margin-left: auto;
  background: #e3e3e3;
  font-size: 7px;
  line-height: 8px;
  text-align: center;
}

.material {
  height: 45px;
  padding: 1px;
  border-bottom: 1px solid #c2c8cf;
  background: #f0f0f0;
  display: flex;
}

.preview {
  width: 40px;
  height: 42px;
  border: 1px solid #aaa;
  background: linear-gradient(to top right, #a1aeb8 50%, #fff 50%);
}

.material .name {
  width: 109px;
  height: 11px;
  margin-left: 1px;
  padding-left: 2px;
  border: 1px solid #d5d5d5;
  color: #888;
  line-height: 9px;
  letter-spacing: -0.2px;
}

.material-tools {
  margin-left: 2px;
  display: flex;
  flex-direction: column;
  gap: 3px;
}

.material-tools svg {
  width: 12px;
  height: 12px;
}

.tabs {
  height: 16px;
  padding-top: 4px;
  display: flex;
  line-height: 11px;
  letter-spacing: -0.15px;
}

.tabs span {
  width: 23px;
  height: 12px;
  padding-left: 2px;
  border-right: 1px solid #ddd;
  padding-top: 1px;
}

.tabs .on {
  width: 26px;
  padding: 0 3px;
  background: #fff;
}

.tabs svg {
  width: 11px;
  height: 11px;
  margin: -2px 2px 0 auto;
}

.nav {
  height: 18px;
  padding: 0 2px 0 5px;
  background: #f0f0f0;
  display: flex;
  align-items: center;
}

.nav > svg {
  width: 10px;
  height: 10px;
  margin-right: 4px;
}

.dropdown {
  width: 105px;
  height: 13px;
  padding: 0 2px 0 1px;
  background: #fff;
  border: 1px solid #bbb;
  display: flex;
  align-items: center;
  justify-content: space-between;
}

.dropdown span {
  letter-spacing: -0.35px;
}

.dropdown svg {
  width: 7px;
  height: 5px;
  flex: none;
}

.nav .details {
  margin: 0 0 0 4px;
}

.swatches {
  height: 170px;
  padding: 0 0 0 3px;
  background: #fff;
  border-bottom: 1px solid #c8cfd6;
  display: grid;
  grid-template-columns: repeat(7, 21.5px);
  grid-auto-rows: 21.5px;
  align-content: start;
}

.swatches svg {
  width: 21px;
  height: 21px;
  border: 1px solid #d2d2d2;
  background: #e8e8e8;
}

.statusbar {
  height: 16px;
  padding-left: 3px;
  display: flex;
  align-items: center;
}

.statusbar svg {
  width: 9px;
  height: 9px;
  margin-right: 9px;
}

.statusbar > i {
  width: 1px;
  height: 7px;
  margin-left: -2px;
  background: #bbb;
}

.hint {
  margin-left: 5px;
  font-size: 7.6px;
}

.measure {
  width: 167px;
  height: 16px;
  margin-left: auto;
  padding: 1px 3px 0 0;
  background: #f1f3f6;
  z-index: 2;
  display: flex;
  align-items: center;
}

.measure span {
  margin-left: 10px;
}

.measure .value {
  width: 120px;
  height: 14px;
  margin-left: auto;
  padding-left: 2px;
  background: #fff;
  border: 1px solid #ccc;
  font-size: 7.4px;
  line-height: 13px;
}

.taskbar {
  height: 24px;
  background: linear-gradient(90deg, #1c252e 234px, #252428 700px, #2a2526);
  display: flex;
  align-items: center;
}

.start {
  width: 29px;
  height: 24px;
  background: #1b1c1e;
  display: flex;
  align-items: center;
  justify-content: center;
}

.start svg {
  width: 11px;
  height: 11px;
}

.search {
  width: 205px;
  height: 24px;
  padding-left: 7px;
  background: #f2f2f2;
  display: flex;
  align-items: center;
  font-size: 9px;
  letter-spacing: -0.26px;
  color: #444;
}

.search svg {
  width: 10px;
  height: 10px;
  margin-right: 6px;
}

.apps {
  display: flex;
}

.apps span {
  position: relative;
  width: 29.35px;
  height: 24px;
  display: flex;
  align-items: center;
  justify-content: center;
}

.apps svg {
  width: 15px;
  height: 15px;
}

.apps span:first-child svg {
  width: 11px;
  height: 11px;
}

.apps .run::after {
  content: "";
  position: absolute;
  left: 3px;
  right: 3px;
  bottom: 0;
  height: 1px;
  background: #7bb9e8;
}

.apps .current {
  background: #4b484a;
}

.apps .current svg {
  width: 14px;
  height: 14px;
}

.apps .current::after {
  left: 0;
  right: 0;
}

.apps em, .notes em {
  position: absolute;
  right: 1px;
  bottom: 2px;
  width: 11px;
  height: 11px;
  border: 1px solid #99a;
  border-radius: 50%;
  background: #222a33;
  color: #fff;
  font-size: 7px;
  line-height: 9px;
  text-align: center;
}

.apps .mail em {
  font-size: 7.5px;
  font-weight: 600;
  letter-spacing: -0.3px;
}

.apps .whatsapp em {
  right: 4px;
  border-color: #e02020;
  background: #e02020;
}

.acad b {
  width: 15px;
  height: 15px;
  background: #f6eeee;
  color: #a82328;
  font: bold 14px/15px "Liberation Sans", sans-serif;
  text-align: center;
}

.systray {
  margin-left: auto;
  color: #eee;
  display: flex;
  align-items: center;
}

.systray > svg {
  width: 36px;
  height: 12px;
  overflow: visible;
}

.clock {
  width: 46px;
  margin-left: 1px;
  display: flex;
  flex-direction: column;
  align-items: center;
  line-height: 10.5px;
  letter-spacing: -0.25px;
}

.notes {
  position: relative;
  width: 28px;
  height: 24px;
  padding: 6px 0 0 3px;
}

.notes svg {
  width: 12px;
  height: 10px;
}

.notes em {
  right: 10px;
  width: 9px;
  height: 9px;
  line-height: 7px;
  font-size: 6px;
}
```

FILE: swatches.js
```js
// [pattern, base colour, detail colour]
const materials = [
  ["paver", "#8d7c7d", "#6c5c5f"], ["cobble", "#77797b", "#505254"], ["plain", "#853236", ""], ["brickthin", "#f3f3f3", "#d9d9d9"], ["diamond", "#fff", "#444"], ["hex", "#fff", "#c8302d"], ["cross", "#fff", "#94643d"],
  ["fence", "#eef1f2", "#aab"], ["fence", "#a5a8aa", "#777"], ["fence", "#f7f4f5", "#ccc"], ["wood", "#7e8182", "#5d6061"], ["noise", "#52a220", "#49981c"], ["noise", "#84a334", "#7d9c30"], ["noise", "#77777a", "#5c5c5f"],
  ["noise", "#a6403f", "#7d2d2d"], ["noise", "#a8956f", "#6d5d40"], ["noise", "#9b5c54", "#7a403b"], ["pebble", "#4b3c2d", "#c6b59e"], ["noise", "#85858b", "#65656c"], ["noise", "#938c8d", "#6e6769"], ["wood", "#989a92", "#898b83"],
  ["noise", "#bd9550", "#b48c49"], ["noise", "#847771", "#655b57"], ["tile", "#b98264", "#c8794c"], ["noise", "#9a9c9e", "#929496"], ["noise", "#a95b68", "#a15360"], ["paver", "#b28577", "#a17568"], ["noise", "#b8501c", "#a94514"],
  ["spots", "#a4a56c", "#7c8148"], ["block", "#e0e5dd", "#81936c"], ["basket", "#e5e9e2", "#87986d"], ["noise", "#977868", "#73574b"], ["noise", "#84695d", "#614b42"], ["spots", "#e0bf80", "#b38d4e"], ["pebble", "#86483b", "#b07f6c"],
  ["leaf", "#437f48", "#79aa7b"], ["leaf", "#78a02c", "#aec75b"], ["leaf", "#3f7713", "#6f9e31"], ["noise", "#86a052", "#789546"], ["noise", "#508c43", "#4a873e"], ["leaf", "#3c9615", "#61b636"], ["leaf", "#37796d", "#63a99c"],
  ["leaf", "#3b6e37", "#6f9b68"], ["wood", "#a34318", "#792c0d"], ["rail", "#b2601f", "#9c5118"]
];

const lines = {
  paver: "M0 4h11M11 0v8M0 12h18M5 4v8M5 8h13M11 12v6",
  cobble: "M0 6h18M0 12h18M6 0v6M13 0v6M3 6v6M10 6v6M16 6v6M6 12v6M13 12v6",
  block: "M0 1.500h18M0 9h18M0 16.500h18M4 1.500V9M14 1.500V9M8.500 9v8",
  brickthin: "M0 3h18M0 6h18M0 9h18M0 12h18M0 15h18M5 0v3M12 3v3M7 6v3M14 9v3M4 12v3M10 15v3",
  basket: "M0 5h10M5 5v13M10 0v9M5 9h13M14 9v9M5 14h9M14 0v5h4",
  diamond: "M1 9L8 1.500h2L17 8l-6 8.500H9z",
  hex: "M0 9h2L6 1h6l4 8h2M2 9l4 8h6l4-8",
  fence: "M0 3h18M3 1v15M6 1v15M9 1v15M12 1v15M15 1v15M0 16h18"
};

let seed = 48271903;
function rand() {
  seed = (seed * 16807) % 2147483647;
  return seed / 2147483647;
}

function dots(count, w, h, color) {
  let out = "";
  for (let i = 0; i < count; i++) {
    const x = (rand() * (18 - w)).toFixed(1);
    const y = (rand() * (18 - h)).toFixed(1);
    out += `<rect x="${x}" y="${y}" width="${w}" height="${h}" fill="${color}"/>`;
  }
  return out;
}

// loose grid of stones, each nudged a little
function stones(color) {
  let out = "";
  for (let y = 2; y < 18; y += 3.2) {
    for (let x = 2; x < 17; x += 3.8) {
      out += `<ellipse cx="${(x + rand()).toFixed(1)}" cy="${(y + rand() - 0.5).toFixed(1)}" rx="1.6" ry="1.1" fill="${color}"/>`;
    }
  }
  return out;
}

function draw([kind, base, detail], index) {
  let body = `<rect width="18" height="18" fill="${base}"/>`;
  if (lines[kind]) body += `<path d="${lines[kind]}" fill="none" stroke="${detail}" stroke-width="${kind === "fence" ? 0.6 : 1.1}"/>`;
  if (kind === "noise") body += dots(130, 1, 1, detail);
  if (kind === "leaf") body += dots(60, 1.6, 1.4, detail);
  if (kind === "spots") body += dots(14, 1.5, 1.2, detail);
  if (kind === "wood") body += dots(22, 0.8, 9, detail);
  if (kind === "tile") body += dots(6, 5, 5, detail);
  if (kind === "rail") body += dots(20, 5, 0.6, detail) + `<path d="M0 1.500h18" stroke="#eee" stroke-width="2" stroke-dasharray="1.500 1"/><path d="M0 17h18" stroke="#6b3510" stroke-width="2"/>`;
  if (kind === "pebble") body += stones(detail);
  if (kind === "cross") body += `<path d="M0 2l18 14M17 1L1 17" stroke="#7b4f2c" stroke-width="5"/><path d="M0 1.500l18 14M17 .5L1 16.500" stroke="#b5835a" stroke-width="2.200"/>`;
  // dark ground line under the first picket fence
  if (index === 7) body += `<path d="M0 16.500h18" stroke="#111" stroke-width="1.200"/>`;
  return `<svg viewBox="-.5 -.5 19 19">${body}</svg>`;
}

document.getElementById("swatches").innerHTML = materials.map(draw).join("");
```
